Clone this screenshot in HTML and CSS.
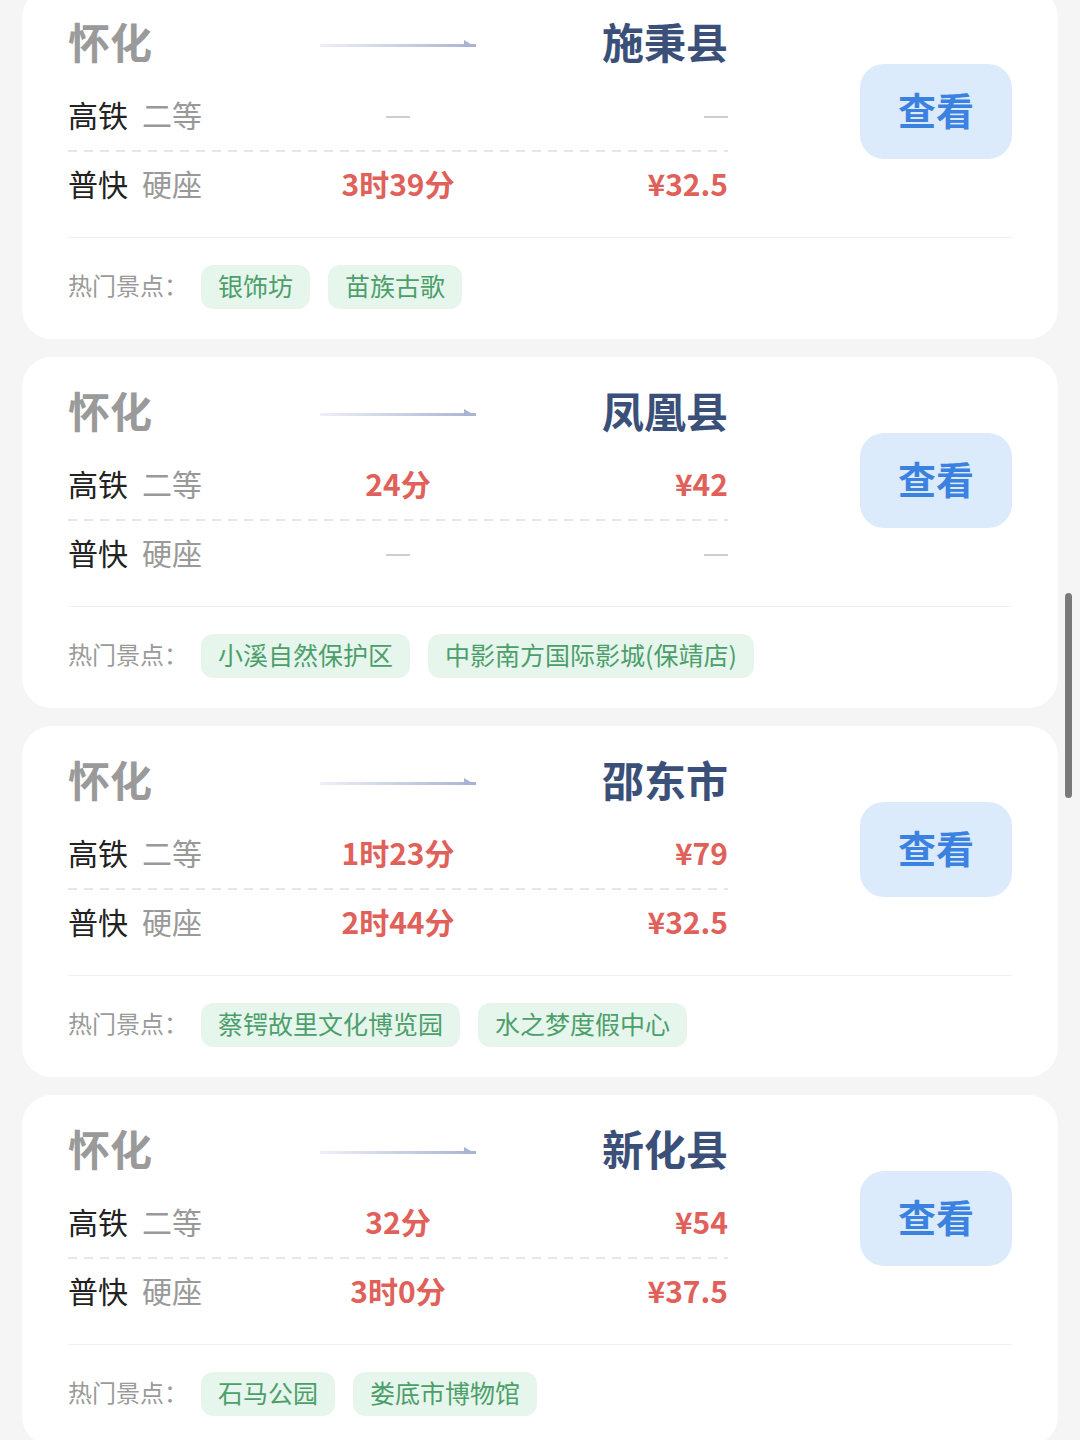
FILE: index.html
```html
<!DOCTYPE html>
<html lang="zh-CN">
<head>
  <meta charset="UTF-8" />
  <meta name="viewport" content="width=device-width, initial-scale=1.0" />
  <title>怀化出发</title>
  <link rel="stylesheet" href="styles.css">
</head>
<body>
  <div id="list">

    <div class="card">
      <div class="card-main">
        <div class="route">
          <div class="route-head">
            <span class="city-from">怀化</span>
            <span class="arrow"><svg width="156" height="12" viewBox="0 0 156 12"><defs><linearGradient id="ag1" x1="0" x2="1"><stop offset="0" stop-color="#eef0f6"/><stop offset="1" stop-color="#a9b3d2"/></linearGradient></defs><rect x="0" y="7" width="156" height="3" fill="url(#ag1)"/><polygon points="144,3 156,10 144,10" fill="#a9b3d2"/></svg></span>
            <span class="city-to">施秉县</span>
          </div>
          <div class="fare-row dashed">
            <span class="train">高铁<em>二等</em></span>
            <span class="dur"><i class="none"></i></span>
            <span class="price"><i class="none"></i></span>
          </div>
          <div class="fare-row">
            <span class="train">普快<em>硬座</em></span>
            <span class="dur">3时39分</span>
            <span class="price">¥32.5</span>
          </div>
        </div>
        <button class="view-btn">查看</button>
      </div>
      <div class="spots">
        <span class="spots-label">热门景点：</span>
        <span class="tag">银饰坊</span>
        <span class="tag">苗族古歌</span>
      </div>
    </div>

    <div class="card">
      <div class="card-main">
        <div class="route">
          <div class="route-head">
            <span class="city-from">怀化</span>
            <span class="arrow"><svg width="156" height="12" viewBox="0 0 156 12"><defs><linearGradient id="ag2" x1="0" x2="1"><stop offset="0" stop-color="#eef0f6"/><stop offset="1" stop-color="#a9b3d2"/></linearGradient></defs><rect x="0" y="7" width="156" height="3" fill="url(#ag2)"/><polygon points="144,3 156,10 144,10" fill="#a9b3d2"/></svg></span>
            <span class="city-to">凤凰县</span>
          </div>
          <div class="fare-row dashed">
            <span class="train">高铁<em>二等</em></span>
            <span class="dur">24分</span>
            <span class="price">¥42</span>
          </div>
          <div class="fare-row">
            <span class="train">普快<em>硬座</em></span>
            <span class="dur"><i class="none"></i></span>
            <span class="price"><i class="none"></i></span>
          </div>
        </div>
        <button class="view-btn">查看</button>
      </div>
      <div class="spots">
        <span class="spots-label">热门景点：</span>
        <span class="tag">小溪自然保护区</span>
        <span class="tag">中影南方国际影城(保靖店)</span>
      </div>
    </div>

    <div class="card">
      <div class="card-main">
        <div class="route">
          <div class="route-head">
            <span class="city-from">怀化</span>
            <span class="arrow"><svg width="156" height="12" viewBox="0 0 156 12"><defs><linearGradient id="ag3" x1="0" x2="1"><stop offset="0" stop-color="#eef0f6"/><stop offset="1" stop-color="#a9b3d2"/></linearGradient></defs><rect x="0" y="7" width="156" height="3" fill="url(#ag3)"/><polygon points="144,3 156,10 144,10" fill="#a9b3d2"/></svg></span>
            <span class="city-to">邵东市</span>
          </div>
          <div class="fare-row dashed">
            <span class="train">高铁<em>二等</em></span>
            <span class="dur">1时23分</span>
            <span class="price">¥79</span>
          </div>
          <div class="fare-row">
            <span class="train">普快<em>硬座</em></span>
            <span class="dur">2时44分</span>
            <span class="price">¥32.5</span>
          </div>
        </div>
        <button class="view-btn">查看</button>
      </div>
      <div class="spots">
        <span class="spots-label">热门景点：</span>
        <span class="tag">蔡锷故里文化博览园</span>
        <span class="tag">水之梦度假中心</span>
      </div>
    </div>

    <div class="card">
      <div class="card-main">
        <div class="route">
          <div class="route-head">
            <span class="city-from">怀化</span>
            <span class="arrow"><svg width="156" height="12" viewBox="0 0 156 12"><defs><linearGradient id="ag4" x1="0" x2="1"><stop offset="0" stop-color="#eef0f6"/><stop offset="1" stop-color="#a9b3d2"/></linearGradient></defs><rect x="0" y="7" width="156" height="3" fill="url(#ag4)"/><polygon points="144,3 156,10 144,10" fill="#a9b3d2"/></svg></span>
            <span class="city-to">新化县</span>
          </div>
          <div class="fare-row dashed">
            <span class="train">高铁<em>二等</em></span>
            <span class="dur">32分</span>
            <span class="price">¥54</span>
          </div>
          <div class="fare-row">
            <span class="train">普快<em>硬座</em></span>
            <span class="dur">3时0分</span>
            <span class="price">¥37.5</span>
          </div>
        </div>
        <button class="view-btn">查看</button>
      </div>
      <div class="spots">
        <span class="spots-label">热门景点：</span>
        <span class="tag">石马公园</span>
        <span class="tag">娄底市博物馆</span>
      </div>
    </div>

  </div>
  <div class="scrollbar"></div>
</body>
</html>
```

FILE: styles.css
```css
body {
  margin: 0;
  background-color: #f5f5f5;
  font-family: 'Noto Sans CJK SC', 'Noto Sans', sans-serif;
  height: 1440px;
  overflow: hidden;
}
#list {
  margin-top: -12px;
  padding: 0 22px;
}
.card {
  background-color: white;
  border-radius: 30px;
  padding: 20px 46px 0;
  margin-bottom: 18px;
  height: 351px;
  box-sizing: border-box;
}
.card-main {
  display: flex;
  padding-bottom: 17px;
  border-bottom: 1px solid #f0f0f0;
}
.route {
  width: 660px;
}
.route-head, .fare-row {
  display: grid;
  grid-template-columns: 220px 220px 220px;
  align-items: center;
}
.route-head {
  height: 64px;
  margin-bottom: 10px;
}
.arrow {
  justify-self: center;
  display: flex;
  margin-top: 6px;
}
.city-from {
  font-size: 42px;
  font-weight: bold;
  color: #9a9a9a;
}
.city-to {
  justify-self: end;
  font-size: 42px;
  font-weight: bold;
  color: #3b5079;
}
.fare-row {
  height: 62px;
  padding-bottom: 6px;
}
.fare-row.dashed {
  height: 64px;
  background: repeating-linear-gradient(to right, #e4e7ee 0 9px, transparent 9px 16px) left bottom / 100% 2px no-repeat;
}
.train {
  font-size: 30px;
  color: #222;
}
.train em {
  font-style: normal;
  color: #999;
  margin-left: 14px;
}
.dur {
  justify-self: center;
  font-size: 30px;
  font-weight: bold;
  color: #e0605a;
}
.price {
  justify-self: end;
  font-size: 30px;
  font-weight: bold;
  color: #e0605a;
}
.none {
  display: block;
  width: 24px;
  height: 2px;
  margin-top: 6px;
  background-color: #cfcfcf;
}
.view-btn {
  margin-left: auto;
  margin-top: 56px;
  width: 152px;
  height: 95px;
  padding: 0 0 6px;
  border: none;
  border-radius: 24px;
  background-color: #dcebfc;
  color: #3b82e0;
  font-family: 'Noto Sans CJK SC', sans-serif;
  font-size: 38px;
  font-weight: bold;
  cursor: pointer;
}
.spots {
  display: flex;
  align-items: center;
  padding-top: 27px;
}
.spots-label {
  font-size: 24px;
  color: #9a9a9a;
  margin-right: 13px;
  padding-bottom: 6px;
}
.tag {
  display: flex;
  align-items: center;
  height: 44px;
  padding: 0 17px 4px;
  box-sizing: border-box;
  margin-right: 18px;
  border-radius: 12px;
  background-color: #e7f6ed;
  color: #4c9f6a;
  font-size: 25px;
}
.scrollbar {
  position: fixed;
  right: 8px;
  top: 593px;
  width: 7px;
  height: 205px;
  border-radius: 4px;
  background-color: #7a7a7a;
}
```
